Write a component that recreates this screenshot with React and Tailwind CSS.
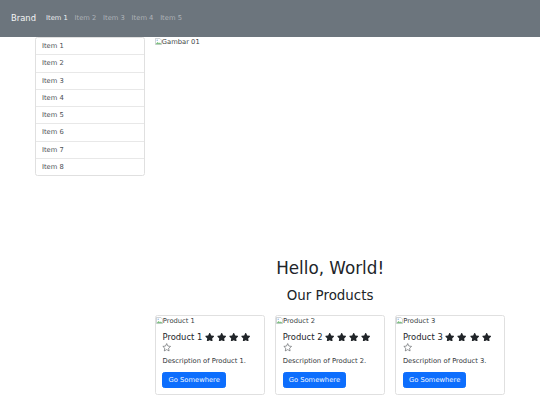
const items = ['Item 1', 'Item 2', 'Item 3', 'Item 4', 'Item 5', 'Item 6', 'Item 7', 'Item 8'];
const products = [1, 2, 3];

function BrokenImg({ alt }) {
  return (
    <div className="flex items-start leading-[10px] text-[6.75px] text-[#3a3f44]">
      <svg width="7" height="7" viewBox="0 0 16 16" className="mt-[1px] shrink-0">
        <path d="M1 1h10l4 4v10H1z" fill="#fff" stroke="#a5aab0" strokeWidth="1.2" />
        <path d="M2 13l4-4 3 3 2-2 3 3v1H2z" fill="#7cbf7f" />
        <circle cx="5" cy="5" r="1.6" fill="#86b3e3" />
      </svg>
      <span>{alt}</span>
    </div>
  );
}

function Star() {
  return (
    <svg className="inline-block align-[-1px]" width="9.4" height="8.4" viewBox="0 0 576 512">
      <path
        fill="#212529"
        d="M316.9 18C311.6 7 300.4 0 288.1 0s-23.4 7-28.8 18L195 150.3 51.4 171.5c-12 1.8-22 10.2-25.7 21.7s-.7 24.2 7.9 32.7L137.8 329 113.2 474.7c-2 12 3 24.2 12.9 31.3s23 8 33.8 2.3l128.3-68.5 128.3 68.5c10.8 5.7 23.9 4.9 33.8-2.3s14.9-19.3 12.9-31.3L438.5 329 542.7 225.9c8.6-8.5 11.7-21.2 7.9-32.7s-13.7-19.9-25.7-21.7L381.2 150.3 316.9 18z"
      />
    </svg>
  );
}

function StarOutline() {
  return (
    <svg className="inline-block align-[-1px]" width="9.4" height="8.4" viewBox="0 0 24 22">
      <path
        d="M12 1.5l3.1 6.5 7 .9-5.1 4.9 1.3 7-6.3-3.4-6.3 3.4 1.3-7L1.9 8.9l7-.9z"
        fill="none"
        stroke="#212529"
        strokeWidth="1.2"
        strokeLinejoin="round"
      />
    </svg>
  );
}

export default function App() {
  return (
    <div className="min-h-[405px] bg-white font-['DejaVu_Sans',sans-serif] text-[#212529]">
      <nav className="h-[37px] bg-[#6c757d] flex items-center pl-[11px]">
        <span className="text-[8.4px] text-[#f4f5f6] mr-[6.7px]">Brand</span>
        <div className="flex text-[6.75px]">
          {['Item 1', 'Item 2', 'Item 3', 'Item 4', 'Item 5'].map((t, i) => (
            <span
              key={t}
              className={`px-[3.37px] ${i === 0 ? 'text-[#eceef0]' : 'text-[#aeb3b8]'}`}
            >
              {t}
            </span>
          ))}
        </div>
      </nav>

      <div className="mx-auto w-[481px] flex">
        <div className="w-[120.3px] px-[5px]">
          <ul className="border border-[#e0e0e0] rounded-[2.5px]">
            {items.map((t, i) => (
              <li
                key={t}
                className={`px-[6.4px] py-[3px] text-[6.75px] leading-[10.3px] text-[#4a4f54] ${
                  i > 0 ? 'border-t border-[#e8e8e8]' : ''
                }`}
              >
                {t}
              </li>
            ))}
          </ul>
        </div>

        <div className="w-[360.7px] px-[5px] leading-[10px]">
          <div className="h-[221px]">
            <BrokenImg alt="Gambar 01" />
          </div>
          <h1 className="text-center text-[16.8px] leading-[20.2px]">Hello, World!</h1>
          <h2 className="text-center text-[13.4px] leading-[16.1px] mt-[10px]">Our Products</h2>
          <div className="flex mx-[-5px] mt-[10.5px]">
            {products.map((n) => (
              <div key={n} className="w-1/3 px-[5px]">
                <div className="border border-[#e0e0e0] rounded-[2.5px] flex flex-col">
                  <BrokenImg alt={`Product ${n}`} />
                  <div className="px-[6.7px] pt-[6.7px] pb-[5.5px] flex flex-col items-start">
                    <h5 className="text-[8.4px] leading-[10.1px] mb-[3.4px]">
                      Product {n} <Star /> <Star /> <Star /> <Star /> <StarOutline />
                    </h5>
                    <p className="text-[6.75px] leading-[10.1px] mb-[6.2px] text-[#33373b]">
                      Description of Product {n}.
                    </p>
                    <span className="block bg-[#0d6efd] text-[#f2f7ff] text-[6.75px] leading-[10.1px] px-[5px] py-[2px] rounded-[2.5px] border border-[#0d6efd]">
                      Go Somewhere
                    </span>
                  </div>
                </div>
              </div>
            ))}
          </div>
        </div>
      </div>
    </div>
  );
}
